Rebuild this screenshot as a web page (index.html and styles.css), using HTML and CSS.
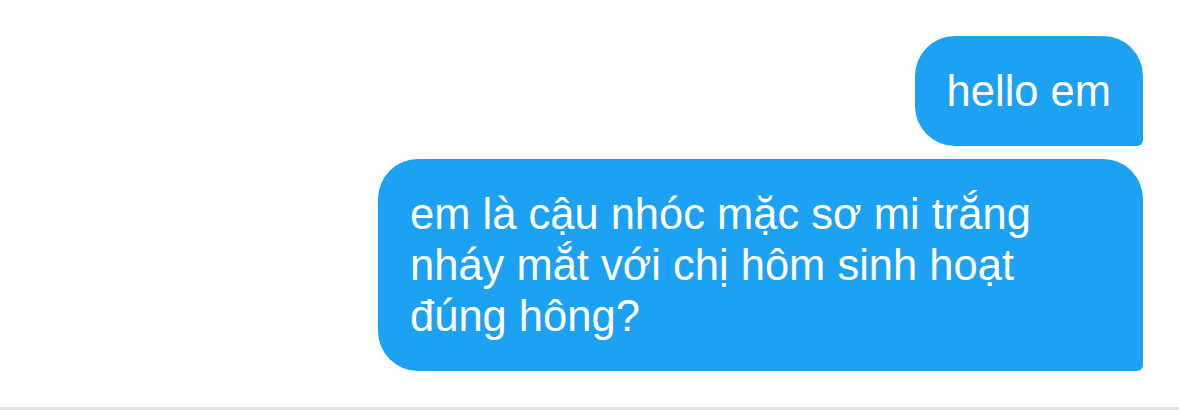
FILE: index.html
```html
<!DOCTYPE html>
<html lang="vi">
<head>
    <meta charset="UTF-8">
    <meta name="viewport" content="width=device-width, initial-scale=1.0">
    <title>Chat</title>
    <link rel="stylesheet" href="styles.css">
</head>
<body>
    <div class="chat-thread">
        <div class="message sent-message">hello em</div>
        <div class="message sent-message">em là cậu nhóc mặc sơ mi trắng nháy mắt với chị hôm sinh hoạt đúng hông?</div>
    </div>
</body>
</html>
```

FILE: styles.css
```css
* {
    margin: 0;
    padding: 0;
    box-sizing: border-box;
}

body {
    background-color: #fff;
    font-family: 'Liberation Sans', Arial, sans-serif;
}

.chat-thread {
    height: 410px;
    border-bottom: 3px solid #e2e2e2;
    padding: 36px 36px 0 0;
    display: flex;
    flex-direction: column;
    align-items: flex-end;
    gap: 13px;
}

.message {
    max-width: 765px;
    padding: 29.5px 32px;
    border-radius: 40px;
    font-size: 43.5px;
    line-height: 51px;
}

.sent-message {
    background-color: #1da1f2;
    color: #fff;
    border-bottom-right-radius: 6px;
}
```
